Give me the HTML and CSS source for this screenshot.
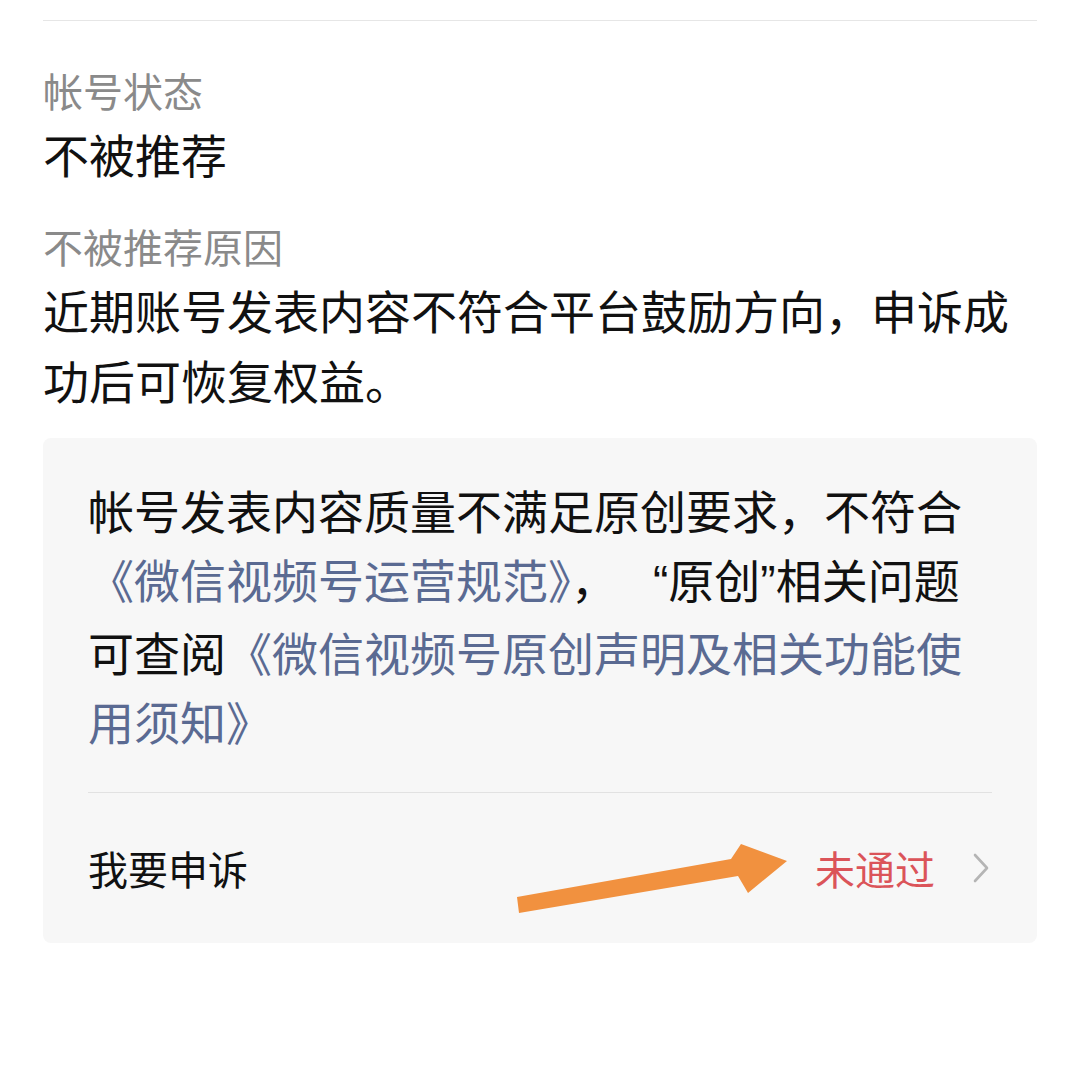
FILE: index.html
```html
<!DOCTYPE html>
<html lang="zh-CN">
<head>
<meta charset="utf-8">
<title>帐号状态</title>
<link rel="stylesheet" href="styles.css">
</head>
<body>
<div class="page">
  <div class="rule"></div>
  <div class="label first">帐号状态</div>
  <div class="value">不被推荐</div>
  <div class="label second">不被推荐原因</div>
  <div class="reason">近期账号发表内容不符合平台鼓励方向，申诉成功后可恢复权益。</div>

  <div class="card">
    <div class="card-text">帐号发表内容质量不满足原创要求，不符合<br><span class="link">《微信视频号运营规范》</span>，<span class="q open">“</span>原创<span class="q">”</span>相关问题<br>可查阅<span class="link">《微信视频号原创声明及相关功能使<br>用须知》</span></div>
    <div class="divider"></div>
    <div class="row">
      <span class="row-title">我要申诉</span>
      <span class="row-right">
        <span class="status">未通过</span>
        <svg class="chevron" width="16" height="30" viewBox="0 0 16 30"><path d="M2 2 L14 15 L2 28" fill="none" stroke="#b5b5b5" stroke-width="2.6" stroke-linecap="round" stroke-linejoin="round"/></svg>
      </span>
    </div>
    <svg class="arrow" viewBox="0 0 994 502" width="994" height="502">
      <polygon points="476,475 474,459 688,421 698,406 744,423 705,455 695,438" fill="#f1913f"/>
    </svg>
  </div>
</div>
</body>
</html>
```

FILE: styles.css
```css
html, body {
  margin: 0;
  padding: 0;
  background: #ffffff;
}

body {
  font-family: "Noto Sans CJK SC", "Noto Sans", sans-serif;
  color: #111111;
}

.page {
  padding: 20px 43px 0;
}

.rule {
  height: 1px;
  background: #e6e6e6;
}

.label {
  font-size: 40px;
  line-height: 56px;
  color: #8a8a8a;
}

.label.first {
  margin-top: 41px;
}

.label.second {
  margin-top: 30px;
}

.value {
  font-size: 46px;
  line-height: 70px;
}

.reason {
  margin-top: 0;
  font-size: 46px;
  line-height: 70px;
}

.card {
  position: relative;
  margin-top: 24px;
  background: #f7f7f7;
  border-radius: 8px;
  padding: 37px 45px 0;
}

.card-text {
  font-size: 46px;
  line-height: 69px;
  color: #111111;
}

.link {
  color: #5a6a92;
}

.q {
  font-family: "Liberation Sans", sans-serif;
  font-size: 46px;
}

.q.open {
  padding-left: 36px;
}

.divider {
  margin-top: 37px;
  height: 1px;
  background: #e2e2e2;
}

.row {
  height: 150px;
  display: flex;
  align-items: center;
  justify-content: space-between;
}

.row-title {
  font-size: 40px;
  color: #111111;
}

.row-right {
  display: flex;
  align-items: center;
  gap: 38px;
  margin-right: 3px;
}

.status {
  font-size: 40px;
  color: #db5459;
}

.chevron {
  display: block;
}

.arrow {
  position: absolute;
  left: 0;
  top: 0;
  pointer-events: none;
}
```
